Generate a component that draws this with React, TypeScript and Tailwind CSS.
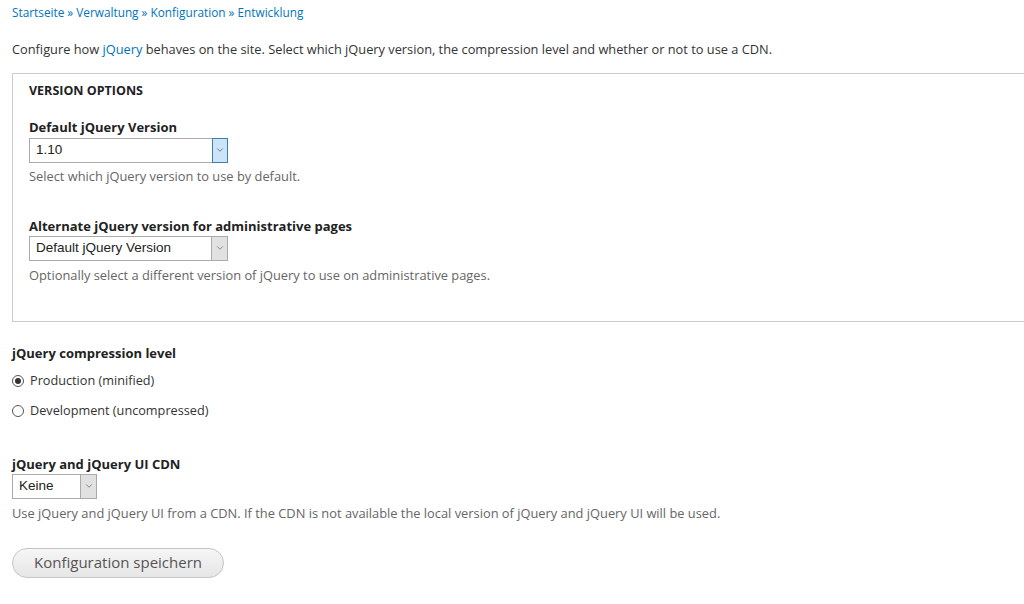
import { ChevronDown } from 'lucide-react';

function Select({ value, width, focused = false }: { value: string; width: string; focused?: boolean }) {
    return (
        <div className={`flex h-[25px] ${width} border border-[#aaaaaa] bg-white font-['Liberation_Sans',Arial,sans-serif] text-[13.5px] text-[#222]`}>
            <div className="flex-1 flex items-center pl-[6px]">{value}</div>
            {focused ? (
                <div className="w-[16px] flex items-center justify-center bg-[#cce4f7] border border-[#3c7fb1] -my-px -mr-px">
                    <ChevronDown className="h-[10px] w-[10px] text-[#444]" strokeWidth={1.5} />
                </div>
            ) : (
                <div className="w-[16px] flex items-center justify-center bg-[#e1e1e1] border-l border-[#aaaaaa]">
                    <ChevronDown className="h-[10px] w-[10px] text-[#555]" strokeWidth={1.5} />
                </div>
            )}
        </div>
    );
}

function Radio({ checked, label }: { checked?: boolean; label: string }) {
    return (
        <label className="flex items-center h-[18px] gap-[6px] text-[12.7px] text-[#333]">
            <span className="h-[12px] w-[12px] rounded-full border border-[#555] bg-white flex items-center justify-center">
                {checked && <span className="h-[6px] w-[6px] rounded-full bg-[#333]" />}
            </span>
            {label}
        </label>
    );
}

export default function App() {
    return (
        <div className="min-h-[604px] bg-white overflow-hidden font-['Open_Sans','DejaVu_Sans',sans-serif] text-[#333] text-[12.8px]">
            {/* Breadcrumb */}
            <div className="pl-[12px] pt-[4px] text-[11.8px] text-[#0074bd]">
                Startseite » Verwaltung » Konfiguration » Entwicklung
            </div>

            <p className="pl-[12px] mt-[18px] leading-[18px]">
                Configure how <span className="text-[#0074bd]">jQuery</span> behaves on the site. Select which jQuery version, the compression level and whether or not to use a CDN.
            </p>

            {/* Fieldset */}
            <div className="ml-[12px] mt-[15px] w-[1040px] h-[249px] border border-[#cccccc] pl-[16px] pt-[8px]">
                <div className="text-[12.5px] font-bold uppercase text-[#222] leading-[18px]">Version options</div>

                <div className="mt-[18px]">
                    <div className="text-[13px] font-bold text-[#222] leading-[18px]">Default jQuery Version</div>
                    <div className="mt-[2px]">
                        <Select value="1.10" width="w-[199px]" focused />
                    </div>
                    <div className="mt-[4px] text-[12.85px] text-[#666] leading-[18px]">Select which jQuery version to use by default.</div>
                </div>

                <div className="mt-[32px]">
                    <div className="text-[13px] font-bold text-[#222] leading-[18px]">Alternate jQuery version for administrative pages</div>
                    <div className="mt-[1px]">
                        <Select value="Default jQuery Version" width="w-[199px]" />
                    </div>
                    <div className="mt-[5px] text-[12.85px] text-[#666] leading-[18px]">Optionally select a different version of jQuery to use on administrative pages.</div>
                </div>
            </div>

            <div className="pl-[12px] mt-[22px]">
                <div className="text-[13px] font-bold text-[#222] leading-[18px]">jQuery compression level</div>
                <div className="mt-[10px] flex flex-col gap-[12px]">
                    <Radio checked label="Production (minified)" />
                    <Radio label="Development (uncompressed)" />
                </div>
            </div>

            <div className="pl-[12px] mt-[35px]">
                <div className="text-[13px] font-bold text-[#222] leading-[18px]">jQuery and jQuery UI CDN</div>
                <div className="mt-[1px]">
                    <Select value="Keine" width="w-[85px]" />
                </div>
                <div className="mt-[5px] text-[12.85px] text-[#666] leading-[18px]">Use jQuery and jQuery UI from a CDN. If the CDN is not available the local version of jQuery and jQuery UI will be used.</div>
            </div>

            <div className="pl-[12px] mt-[26px]">
                <button className="h-[30px] w-[212px] rounded-[15px] border border-[#c5c5c5] bg-gradient-to-b from-[#f6f6f6] to-[#e6e6e6] text-[15px] text-[#555]">
                    Konfiguration speichern
                </button>
            </div>
        </div>
    );
}
